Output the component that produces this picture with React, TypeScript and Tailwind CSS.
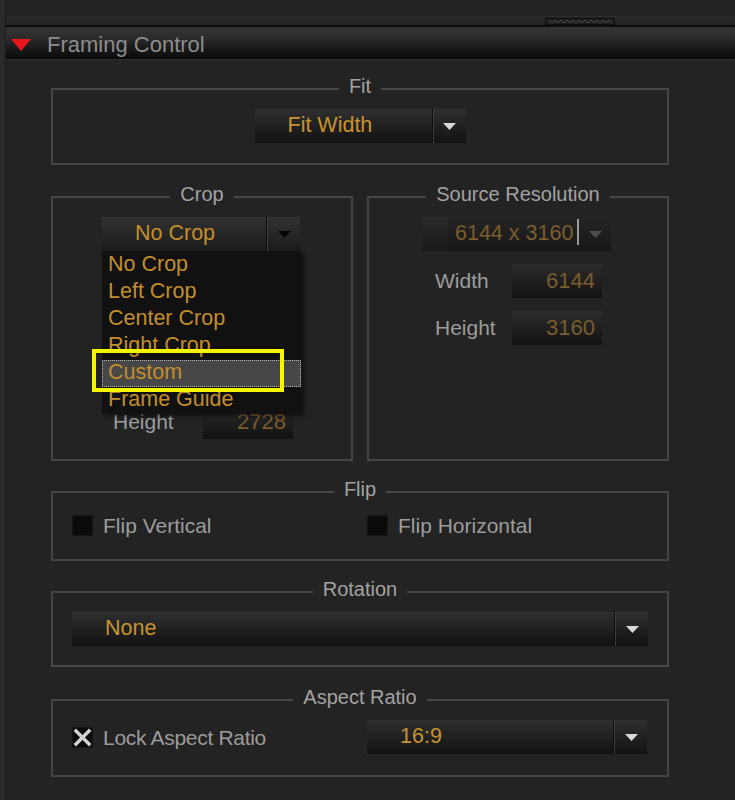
import React from "react";

const Tri = ({ color }: { color: string }) => (
  <svg width="13" height="7" viewBox="0 0 13 7">
    <path d="M0 0H13L6.5 7Z" fill={color} />
  </svg>
);

function Select({
  text,
  className,
  textClass,
  arrow,
  sepClass,
}: {
  text: string;
  className: string;
  textClass: string;
  arrow: React.ReactNode;
  sepClass?: string;
}) {
  return (
    <div className={"flex h-[34px] bg-[linear-gradient(to_bottom,#2f2f2f,#121212)] " + className}>
      <div className={"flex-1 flex items-center pl-[33px] pb-[1px] text-[21.5px] leading-none whitespace-nowrap " + textClass}>
        {text}
      </div>
      <div className={sepClass ?? "w-[2px] border-l border-[#0c0c0c] bg-[#3e3e3e]"} />
      <div className="w-[32px] flex items-center justify-center">{arrow}</div>
    </div>
  );
}

function Group({ title, className, children }: { title: string; className?: string; children: React.ReactNode }) {
  return (
    <fieldset className={"border-2 border-[#464646] min-w-0 m-0 " + (className ?? "")}>
      <legend className="mx-auto px-[10px] pb-[6px] text-[20px] leading-[24px] text-[#a2a2a2]">{title}</legend>
      {children}
    </fieldset>
  );
}

const Check = ({ checked }: { checked?: boolean }) => (
  <div className="w-[21px] h-[21px] bg-[#0b0b0b] border border-[#161616] flex items-center justify-center shrink-0">
    {checked && (
      <svg width="19" height="19" viewBox="0 0 19 19">
        <path d="M3 3L16 16M16 3L3 16" stroke="#d2d2d2" strokeWidth="3.4" strokeLinecap="square" />
      </svg>
    )}
  </div>
);

const Field = ({ value }: { value: string }) => (
  <div className="w-[90px] h-[34px] bg-[linear-gradient(to_bottom,#2c2c2c,#121212)] flex items-center justify-end pr-[7px] pb-[1px] text-[22px] leading-none text-[#7a5c2e]">
    {value}
  </div>
);

export default function App() {
  const items = ["No Crop", "Left Crop", "Center Crop", "Right Crop", "Custom", "Frame Guide"];
  return (
    <div className="w-[735px] h-[800px] bg-[#232323] flex overflow-hidden font-['Liberation_Sans',Arial,sans-serif]">
      <div className="w-[6px] bg-[#2a2a2a] border-r border-[#1a1a1a]" />
      <div className="flex-1 flex flex-col">
        <div className="h-[16px]" />
        <div className="h-px bg-[#2c2c2c]" />
        <div className="h-[8px] bg-[#262626] flex items-center">
          <svg className="ml-[539px]" width="70" height="7" viewBox="0 0 70 7">
            <rect x="0.5" y="0.5" width="69" height="6" fill="#202020" stroke="#0e0e0e" />
            <polyline
              points="4,2 7,5 10,2 13,5 16,2 19,5 22,2 25,5 28,2 31,5 34,2 37,5 40,2 43,5 46,2 49,5 52,2 55,5 58,2 61,5 64,2 67,5"
              fill="none"
              stroke="#4a4a4a"
              strokeWidth="1"
            />
          </svg>
        </div>
        <div className="h-[2px] bg-[#0b0b0b]" />
        <div className="h-[32px] bg-[linear-gradient(to_bottom,#343434_0%,#2b2b2b_35%,#151515_75%,#0a0a0a_100%)] flex items-center pt-[3px]">
          <svg className="ml-[5px]" width="20" height="12" viewBox="0 0 20 12">
            <path d="M0 0H20L10 12Z" fill="#e8171b" />
          </svg>
          <span className="ml-[16px] text-[22px] leading-none text-[#8d8d8d]">Framing Control</span>
        </div>
        <div className="h-px bg-[#303030]" />

        <div className="pl-[45px] flex flex-col">
          <div className="w-[618px] flex flex-col">
            {/* Fit */}
            <Group title="Fit" className="mt-[14px] pb-[20px]">
              <Select
                text="Fit Width"
                className="mt-[5px] mx-auto w-[211px]"
                textClass="text-[#c9922f]"
                arrow={<Tri color="#d9d9d9" />}
              />
            </Group>

            {/* Crop + Source */}
            <div className="mt-[17px] grid grid-cols-2 gap-[14px]">
              <Group title="Crop" className="pb-[20px]">
                <div className="relative ml-[49px] w-[198px] mt-[5px]">
                  <Select
                    text="No Crop"
                    className="w-[198px] h-[33px] bg-[linear-gradient(to_bottom,#323232,#1b1b1b)]"
                    textClass="text-[#c38d2e]"
                    arrow={<Tri color="#050505" />}
                  />
                  <div className="absolute left-0 top-full z-10 w-[199px] h-[163px] pt-px bg-[#111111] shadow-[3px_2px_4px_rgba(0,0,0,0.55)]">
                    {items.map((it) => (
                      <div
                        key={it}
                        className={
                          it === "Custom"
                            ? "h-[27px] pl-[5px] flex items-center pb-[1px] text-[21.5px] leading-none text-[#c38d2e] bg-[#474747] border border-dotted border-[#b5b5b5]"
                            : "h-[27px] pl-[6px] flex items-center pb-[1px] text-[21.5px] leading-none text-[#c38d2e]"
                        }
                      >
                        {it}
                      </div>
                    ))}
                    <div className="absolute left-[-10px] top-[98px] w-[192px] h-[43px] border-4 border-[#f6f600]" />
                  </div>
                </div>
                <div className="flex flex-col gap-[13px] mt-[13px] pl-[60px]">
                  <div className="h-[34px]" />
                  <div className="h-[34px]" />
                  <div className="h-[34px]" />
                  <div className="flex items-center">
                    <span className="w-[90px] text-[21px] leading-none text-[#9c9c9c] pb-[1px]">Height</span>
                    <Field value="2728" />
                  </div>
                </div>
              </Group>

              <Group title="Source Resolution" className="pb-[20px]">
                <div className="ml-[53px] w-[189px] mt-[5px] flex h-[34px] bg-[linear-gradient(to_bottom,#252525,#171717)]">
                  <div className="w-[26px] bg-[linear-gradient(to_bottom,#2a2a2a,#1a1a1a)]" />
                  <div className="flex-1 flex items-center pl-[7px] pb-[1px] text-[21.5px] leading-none whitespace-nowrap text-[#7b5d2e]">
                    6144 x 3160
                  </div>
                  <div className="w-[2px] mt-[2px] mb-[6px] bg-[#9a9a9a]" />
                  <div className="w-[32px] flex items-center justify-center">
                    <Tri color="#4e4e4e" />
                  </div>
                </div>
                <div className="flex flex-col gap-[13px] mt-[13px] pl-[66px]">
                  {[
                    ["Width", "6144"],
                    ["Height", "3160"],
                  ].map(([l, v]) => (
                    <div key={l} className="flex items-center">
                      <span className="w-[77px] text-[21px] leading-none text-[#9c9c9c] pb-[1px]">{l}</span>
                      <Field value={v} />
                    </div>
                  ))}
                </div>
              </Group>
            </div>

            {/* Flip */}
            <Group title="Flip" className="mt-[16px] pb-[23px]">
              <div className="mt-[8px] flex items-center pl-[19px] h-[21px]">
                <div className="w-[295px] flex items-center gap-[10px]">
                  <Check />
                  <span className="text-[21px] leading-none text-[#9c9c9c]">Flip Vertical</span>
                </div>
                <div className="flex items-center gap-[10px]">
                  <Check />
                  <span className="text-[21px] leading-none text-[#9c9c9c]">Flip Horizontal</span>
                </div>
              </div>
            </Group>

            {/* Rotation */}
            <Group title="Rotation" className="mt-[16px] pb-[19px]">
              <Select
                text="None"
                className="mt-[5px] mx-[19px]"
                textClass="text-[#c9922f]"
                arrow={<Tri color="#d9d9d9" />}
              />
            </Group>

            {/* Aspect Ratio */}
            <Group title="Aspect Ratio" className="mt-[18px] pb-[21px]">
              <div className="mt-[5px] flex items-center pl-[19px]">
                <div className="w-[295px] flex items-center gap-[10px]">
                  <Check checked />
                  <span className="text-[21px] leading-none text-[#9c9c9c] tracking-[-0.3px]">Lock Aspect Ratio</span>
                </div>
                <Select
                  text="16:9"
                  className="w-[280px]"
                  textClass="text-[#c9922f]"
                  arrow={<Tri color="#d9d9d9" />}
                />
              </div>
            </Group>
          </div>
        </div>
      </div>
    </div>
  );
}
